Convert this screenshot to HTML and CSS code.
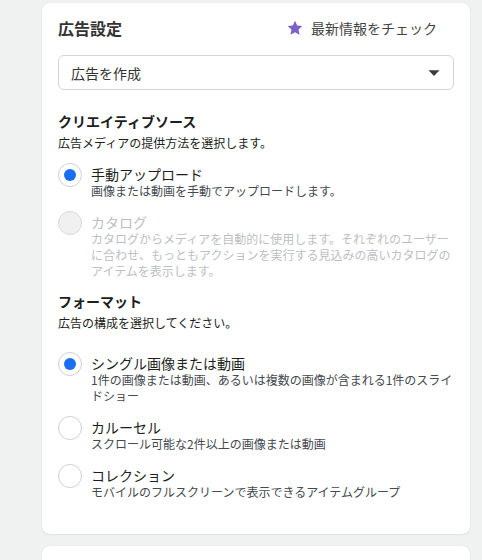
FILE: index.html
```html
<!DOCTYPE html>
<html lang="ja">
<head>
<meta charset="utf-8">
<link rel="stylesheet" href="styles.css">
</head>
<body>
<div class="page">
  <section class="card">
    <div class="header">
      <h1 class="title">広告設定</h1>
      <a class="news">
        <svg class="star" viewBox="0 0 16 16" width="16" height="16"><path d="M8 0.8l2.2 4.7 5.1 0.6-3.8 3.5 1 5.1L8 12.2l-4.5 2.5 1-5.1L0.7 6.1l5.1-0.6z" fill="#7c5fc9"/></svg>
        <span>最新情報をチェック</span>
      </a>
    </div>
    <div class="select">
      <span>広告を作成</span>
      <svg class="caret" viewBox="0 0 12 8" width="12" height="8"><path d="M0.5 1.2h11L6 7z" fill="#3a3b3c"/></svg>
    </div>

    <div class="section">
      <h2 class="sec-title">クリエイティブソース</h2>
      <p class="sec-sub">広告メディアの提供方法を選択します。</p>
      <div class="options">
        <div class="option">
          <span class="radio checked"></span>
          <div class="opt-text">
            <div class="opt-label">手動アップロード</div>
            <div class="opt-desc">画像または動画を手動でアップロードします。</div>
          </div>
        </div>
        <div class="option disabled">
          <span class="radio"></span>
          <div class="opt-text">
            <div class="opt-label">カタログ</div>
            <div class="opt-desc">カタログからメディアを自動的に使用します。それぞれのユーザーに合わせ、もっともアクションを実行する見込みの高いカタログのアイテムを表示します。</div>
          </div>
        </div>
      </div>
    </div>

    <div class="section">
      <h2 class="sec-title">フォーマット</h2>
      <p class="sec-sub">広告の構成を選択してください。</p>
      <div class="options wide">
        <div class="option">
          <span class="radio checked"></span>
          <div class="opt-text">
            <div class="opt-label">シングル画像または動画</div>
            <div class="opt-desc">1件の画像または動画、あるいは複数の画像が含まれる1件のスライ<br>ドショー</div>
          </div>
        </div>
        <div class="option">
          <span class="radio"></span>
          <div class="opt-text">
            <div class="opt-label">カルーセル</div>
            <div class="opt-desc">スクロール可能な2件以上の画像または動画</div>
          </div>
        </div>
        <div class="option">
          <span class="radio"></span>
          <div class="opt-text">
            <div class="opt-label">コレクション</div>
            <div class="opt-desc">モバイルのフルスクリーンで表示できるアイテムグループ</div>
          </div>
        </div>
      </div>
    </div>
  </section>
  <section class="card next"></section>
</div>
</body>
</html>
```

FILE: styles.css
```css
* { box-sizing: border-box; }
html, body { margin: 0; padding: 0; }
body {
  background: #f0f2f1;
  font-family: "Noto Sans CJK JP", "Noto Sans", sans-serif;
  color: #1c1e21;
  width: 482px;
  height: 560px;
  overflow: hidden;
}
.page {
  padding: 3px 12px 0 42px;
  display: flex;
  flex-direction: column;
  gap: 12px;
}
.card {
  background: #fff;
  border-radius: 8px;
  box-shadow: 0 0 1px rgba(0,0,0,0.12), 0 1px 2px rgba(0,0,0,0.06);
  padding: 13px 16px 34px 16px;
}
.card.next { height: 40px; padding: 0; }
.header {
  height: 24px;
  display: flex;
  align-items: center;
  justify-content: space-between;
}
.title {
  margin: 0;
  font-size: 16px;
  font-weight: 700;
  line-height: 24px;
  color: #333;
}
.news {
  display: flex;
  align-items: center;
  gap: 8px;
  margin-right: 17px;
  font-size: 14px;
  line-height: 20px;
  color: #444;
}
.star { display: block; }
.select {
  margin-top: 15px;
  height: 35px;
  border: 1px solid #d3d5d8;
  border-radius: 6px;
  display: flex;
  align-items: center;
  justify-content: space-between;
  padding: 0 13px 0 12px;
  font-size: 14px;
  color: #333;
}
.caret { display: block; }
.section { margin-top: 21px; }
.section + .section { margin-top: 12px; }
.sec-title {
  margin: 0;
  font-size: 14px;
  font-weight: 700;
  line-height: 20px;
  color: #1c1e21;
}
.sec-sub {
  margin: 4px 0 0;
  font-size: 12px;
  line-height: 16px;
  color: #1c1e21;
}
.options {
  margin-top: 12px;
  display: flex;
  flex-direction: column;
  gap: 12px;
}
.options.wide { margin-top: 21px; }
.option {
  display: flex;
  align-items: flex-start;
  gap: 9px;
}
.radio {
  flex: none;
  width: 24px;
  height: 24px;
  border-radius: 50%;
  border: 1px solid #ced0d4;
  background: #fff;
  display: flex;
  align-items: center;
  justify-content: center;
}
.radio.checked::after {
  content: "";
  width: 12px;
  height: 12px;
  border-radius: 50%;
  background: #1a6ef0;
}
.opt-text { padding-top: 2px; min-width: 0; flex: 1; }
.opt-label {
  font-size: 14px;
  line-height: 18px;
  color: #1c1e21;
}
.opt-desc {
  font-size: 12px;
  line-height: 16px;
  color: #444950;
}
.option.disabled .radio { background: #f0f0f0; border-color: #d9dadc; }
.option.disabled .opt-label,
.option.disabled .opt-desc { color: #bcc0c4; }
```
